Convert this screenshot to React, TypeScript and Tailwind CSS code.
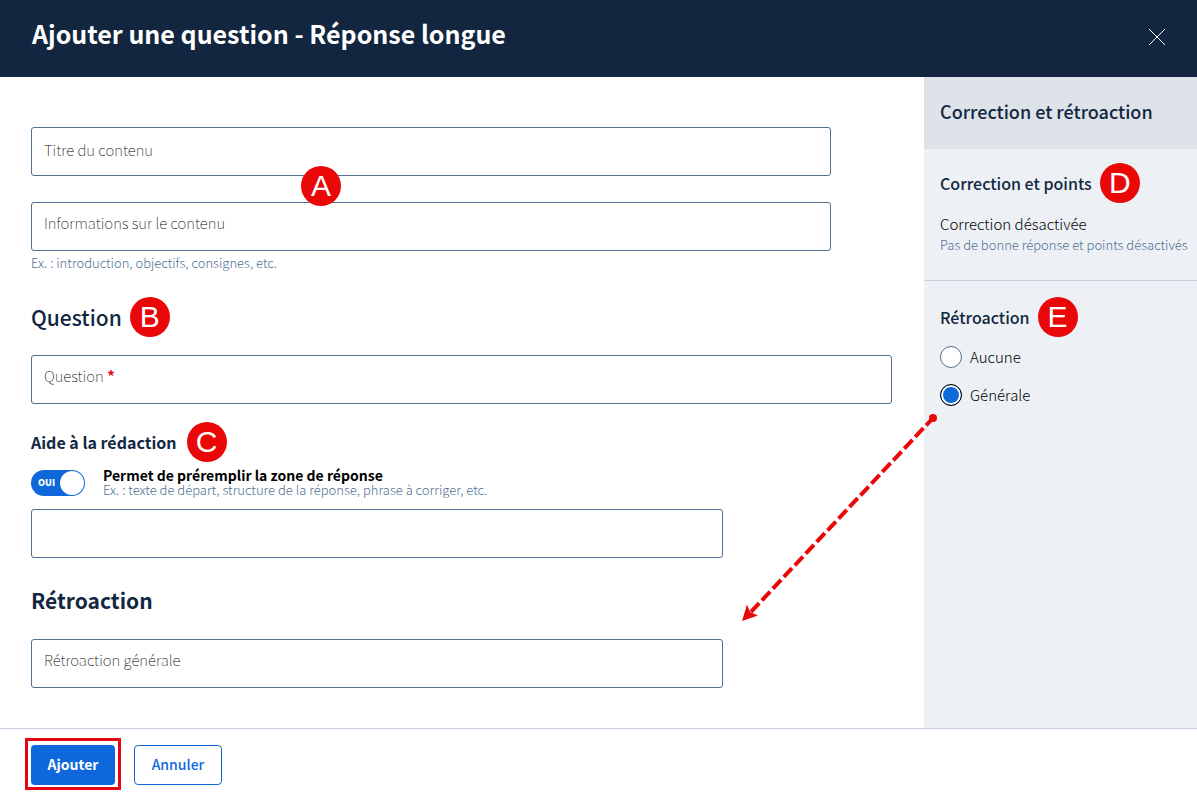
import { useState } from 'react';
import type { ReactNode } from 'react';

function Badge({ children, className = '' }: { children: ReactNode; className?: string }) {
  return (
    <span
      className={`flex size-10 shrink-0 items-center justify-center rounded-full bg-[#ea0708] font-['Liberation_Sans',sans-serif] text-3xl leading-10 font-normal text-white ${className}`}
    >
      {children}
    </span>
  );
}

type FieldProps = {
  id: string;
  label?: string;
  ariaLabel?: string;
  required?: boolean;
  multiline?: boolean;
  className?: string;
};

function TextField({ id, label, ariaLabel, required, multiline = true, className = '' }: FieldProps) {
  const [value, setValue] = useState('');

  return (
    <div className={`relative w-full ${className}`}>
      {multiline ? (
        <textarea
          id={id}
          rows={1}
          aria-label={ariaLabel}
          required={required}
          className="block h-[49px] w-full resize-none rounded-[3px] border border-[#507090] bg-white px-3 py-2 text-[15px] leading-6 font-light"
          value={value}
          onChange={(e) => setValue(e.target.value)}
        />
      ) : (
        <input
          id={id}
          type="text"
          aria-label={ariaLabel}
          required={required}
          className="block h-[49px] w-full rounded-[3px] border border-[#507090] bg-white px-3 text-[15px] leading-6 font-light"
          value={value}
          onChange={(e) => setValue(e.target.value)}
        />
      )}
      {label && !value && (
        <label
          htmlFor={id}
          className={`pointer-events-none absolute left-[13px] text-[15px] leading-6 font-thin text-black ${multiline ? 'top-[9px]' : 'top-[11px]'}`}
        >
          {label}
          {required && <span className="font-bold text-[#e00020]"> *</span>}
        </label>
      )}
    </div>
  );
}

function FeedbackArrow() {
  return (
    <svg
      className="pointer-events-none absolute top-7 right-full z-10 mr-px"
      width="200"
      height="212"
      viewBox="0 0 200 212"
      fill="none"
      aria-hidden="true"
    >
      <path d="M194 7 L11 202" stroke="#ea0708" strokeWidth="4" strokeDasharray="12 4" strokeDashoffset="2" />
      <circle cx="194" cy="7" r="4" fill="#ea0708" />
      <path d="M3 210 L8 193.500 L11 201 L19 204.500 Z" fill="#ea0708" />
    </svg>
  );
}

export default function App() {
  const [prefill, setPrefill] = useState(true);
  const [feedback, setFeedback] = useState('generale');

  return (
    <div className="flex min-h-screen flex-col bg-white font-['Noto_Sans_CJK_SC',sans-serif] text-black">
      <header className="flex h-[77px] items-center justify-between bg-[#12273f] pr-[30px] pb-1 pl-8">
        <h1 className="pb-2 text-[25px] leading-8 font-bold text-white">Ajouter une question - Réponse longue</h1>
        <button type="button" aria-label="Fermer" className="text-white">
          <svg width="20" height="20" viewBox="0 0 20 20" stroke="currentColor" strokeWidth="1" aria-hidden="true">
            <path d="M2 2 L18 18 M18 2 L2 18" />
          </svg>
        </button>
      </header>

      <div className="flex flex-1">
        <main className="min-w-0 flex-1 pt-[50px] pr-8 pb-10 pl-[31px]">
          <div className="relative max-w-[800px]">
            <TextField id="titre" label="Titre du contenu" multiline={false} />
            <Badge className="absolute top-[39px] left-[270px] z-10">A</Badge>
          </div>
          <TextField id="informations" label="Informations sur le contenu" className="mt-[26px] max-w-[800px]" />
          <p className="mt-0.5 text-[13px] leading-5 font-light text-[#4f6f8f]">Ex. : introduction, objectifs, consignes, etc.</p>

          <h2 className="mt-6 flex items-center gap-2 text-[21px] leading-10 font-medium text-[#12273f]">
            Question
            <Badge>B</Badge>
          </h2>
          <TextField id="question" label="Question" required className="mt-[18px]" />

          <h3 className="mt-[18px] flex items-center gap-2.5 text-base leading-10 font-bold text-[#12273f]">
            Aide à la rédaction
            <Badge>C</Badge>
          </h3>
          <div className="mt-[5px] flex items-center gap-[18px]">
            <label className="relative flex h-[26px] w-[54px] shrink-0 cursor-pointer">
              <input
                type="checkbox"
                role="switch"
                aria-label="Permet de préremplir la zone de réponse"
                className="peer size-full cursor-pointer appearance-none rounded-full bg-[#8093a8] checked:bg-[#0f68db]"
                checked={prefill}
                onChange={(e) => setPrefill(e.target.checked)}
              />
              <span className="pointer-events-none absolute top-1/2 left-[7px] -translate-y-1/2 text-[9px] leading-3 font-black text-white">
                {prefill ? 'OUI' : ''}
              </span>
              <span className="pointer-events-none absolute top-px left-px size-6 rounded-full bg-white peer-checked:left-[29px]" />
            </label>
            <div className="pb-0.5">
              <p className="text-sm leading-4 font-bold">Permet de préremplir la zone de réponse</p>
              <p className="text-[13px] leading-3.5 font-light text-[#4f6f8f]">
                Ex. : texte de départ, structure de la réponse, phrase à corriger, etc.
              </p>
            </div>
          </div>
          <TextField id="zone-reponse" ariaLabel="Texte de départ" className="mt-2.5 max-w-[692px]" />

          <h2 className="mt-[22px] text-[21px] leading-10 font-bold text-[#12273f]">Rétroaction</h2>
          <TextField id="retroaction" label="Rétroaction générale" className="mt-[19px] max-w-[692px]" />
        </main>

        <aside className="w-[273px] shrink-0 bg-[#edf1f6]">
          <h2 className="bg-[#dee3ea] px-4 pt-[18px] pb-[22px] text-lg leading-8 font-medium text-[#12273f]">Correction et rétroaction</h2>
          <section className="border-b border-[#c5cfe0] pt-3.5 pb-[27px] pl-4">
            <h3 className="flex items-center gap-2 text-base leading-10 font-medium text-[#12273f]">
              Correction et points
              <Badge>D</Badge>
            </h3>
            <p className="mt-[9px] text-[15px] leading-6 font-light">Correction désactivée</p>
            <p className="text-[13px] leading-[17px] font-light whitespace-nowrap text-[#4f6f8f]">Pas de bonne réponse et points désactivés</p>
          </section>
          <fieldset className="pt-4 pl-4">
            <legend className="float-left flex w-full items-center gap-2 text-base leading-10 font-medium text-[#12273f]">
              Rétroaction
              <Badge>E</Badge>
            </legend>
            <div className="clear-both flex flex-col gap-3.5 pt-2">
              <label className="flex items-center gap-2 text-[15px] leading-6 font-light">
                <input
                  type="radio"
                  name="feedback"
                  className="size-[22px] appearance-none rounded-full border border-[#507090] bg-white checked:border-black checked:bg-[#0f68db] checked:ring-2 checked:ring-white checked:ring-inset"
                  checked={feedback === 'aucune'}
                  onChange={() => setFeedback('aucune')}
                />
                Aucune
              </label>
              <div className="relative">
                <label className="flex items-center gap-2 text-[15px] leading-6 font-light">
                  <input
                    type="radio"
                    name="feedback"
                    className="size-[22px] appearance-none rounded-full border border-[#507090] bg-white checked:border-black checked:bg-[#0f68db] checked:ring-2 checked:ring-white checked:ring-inset"
                    checked={feedback === 'generale'}
                    onChange={() => setFeedback('generale')}
                  />
                  Générale
                </label>
                <FeedbackArrow />
              </div>
            </div>
          </fieldset>
        </aside>
      </div>

      <footer className="flex items-center gap-[19px] border-t border-[#c5cfe0] pt-4 pb-[22px] pl-[31px]">
        <div className="relative">
          <button type="button" className="h-10 w-[84px] rounded-[4px] bg-[#0f68db] pb-0.5 text-sm font-bold text-white">
            Ajouter
          </button>
          <span className="pointer-events-none absolute -inset-x-1.5 -top-[7px] -bottom-[5px] border-3 border-[#e30613]" />
        </div>
        <button type="button" className="h-10 w-[88px] rounded-[4px] border border-[#0f68db] bg-white pb-0.5 text-sm font-medium text-[#0f68db]">
          Annuler
        </button>
      </footer>
    </div>
  );
}
